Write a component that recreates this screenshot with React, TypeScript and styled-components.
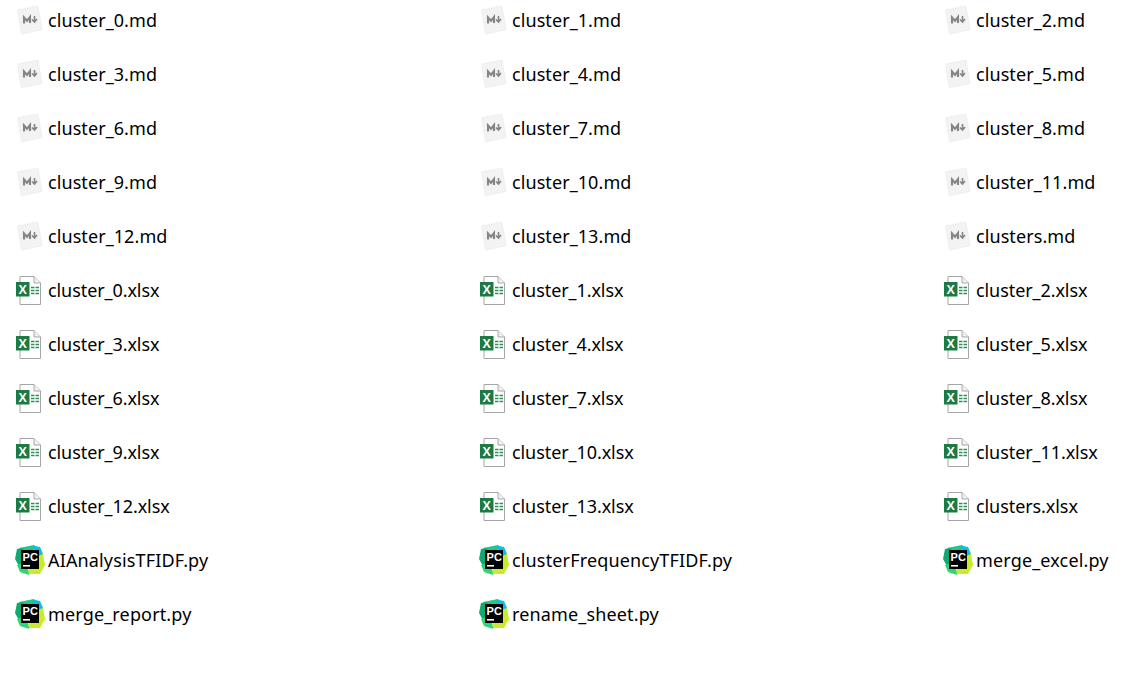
import React from 'react'
import styled, { createGlobalStyle } from 'styled-components'

const GlobalStyle = createGlobalStyle`
  html, body {
    margin: 0;
    background: #fff;
  }
`

const FileGrid = styled.div`
  display: grid;
  grid-template-columns: repeat(3, 464px);
  grid-auto-rows: 54px;
  width: 1131px;
  height: 668px;
  padding-left: 15px;
  margin-top: -7px;
  box-sizing: border-box;
  overflow: hidden;
  font-family: 'Noto Sans', 'Open Sans', sans-serif;
`

const FileItem = styled.div`
  display: flex;
  align-items: center;
  gap: 3px;
  white-space: nowrap;
`

const IconSlot = styled.svg`
  flex: none;
  width: 30px;
  height: 30px;
`

const FileName = styled.span<{ $spacing: number }>`
  font-size: 18px;
  color: #000;
  letter-spacing: ${(p) => p.$spacing}px;
`

const MdIcon = () => (
  <IconSlot viewBox="0 0 30 30">
    <path d="M2.5 5 L23 1 L27 24.5 L6.5 29 Z" fill="#f3f3f3" stroke="#ebebeb" strokeWidth="0.7" />
    <path d="M9 18.5 V12.5 L12 15.8 L15 12 V18" fill="none" stroke="#858585" strokeWidth="2.1" />
    <path d="M19.5 11 V16.5 M17 14.5 L19.5 17 L22 14" fill="none" stroke="#858585" strokeWidth="1.6" />
  </IconSlot>
)

const XlsxIcon = () => (
  <IconSlot viewBox="0 0 30 30">
    <path d="M5 1.5 H19 L25.5 8 V29.5 H5 Z" fill="#fff" stroke="#a6a6a6" />
    <path d="M19 1.5 V8 H25.5" fill="#f0f0f0" stroke="#a6a6a6" />
    <rect x="1" y="7" width="13.5" height="14.5" fill="#1c7a43" />
    <text x="7.7" y="18.8" fontSize="12.5" fontWeight="700" fill="#fff" textAnchor="middle" fontFamily="Liberation Sans, sans-serif">X</text>
    <path d="M16 12.5 H24 M16 15.5 H24 M16 18.5 H24" stroke="#2f9158" strokeWidth="1.5" />
    <path d="M20 11 V20" stroke="#fff" strokeWidth="1" />
  </IconSlot>
)

const PyIcon = () => (
  <IconSlot viewBox="0 0 30 30">
    <path d="M4 3 L19 0 L24 6 L20 14 L8 14 Z" fill="#1fc98a" />
    <path d="M18 0.5 L25 2 L28 9 L26 14 L21 10 Z" fill="#09bfe8" />
    <path d="M2 4 L8 3 L12 15 L5 23 L0 14 Z" fill="#12a96f" />
    <path d="M20 12 L28 9 L30 20 L25 29 L12 29 Z" fill="#c6ec2a" />
    <path d="M2 20 L12 17 L14 30 L5 27 Z" fill="#2fd576" />
    <rect x="6" y="5" width="18" height="19" fill="#000" />
    <text x="7.6" y="15.8" fontSize="11" fontWeight="700" fill="#fff" fontFamily="Liberation Sans, sans-serif">PC</text>
    <rect x="8" y="20" width="7" height="1.6" fill="#fff" />
  </IconSlot>
)

const iconFor = (name: string) => {
  if (name.endsWith('.md')) return <MdIcon />
  if (name.endsWith('.xlsx')) return <XlsxIcon />
  return <PyIcon />
}

const spacingFor = (name: string) => {
  if (name.endsWith('.md')) return 0.08
  if (name.endsWith('.xlsx')) return -0.08
  return 0.15
}

const clusterNames = (ext: string, last: string) => [
  ...Array.from({ length: 14 }, (_, i) => `cluster_${i}.${ext}`),
  last,
]

const files = [
  ...clusterNames('md', 'clusters.md'),
  ...clusterNames('xlsx', 'clusters.xlsx'),
  'AIAnalysisTFIDF.py',
  'clusterFrequencyTFIDF.py',
  'merge_excel.py',
  'merge_report.py',
  'rename_sheet.py',
]

const App = () => {
  return (
    <>
      <GlobalStyle />
      <FileGrid>
        {files.map((name) => (
          <FileItem key={name}>
            {iconFor(name)}
            <FileName $spacing={spacingFor(name)}>{name}</FileName>
          </FileItem>
        ))}
      </FileGrid>
    </>
  )
}

export default App
